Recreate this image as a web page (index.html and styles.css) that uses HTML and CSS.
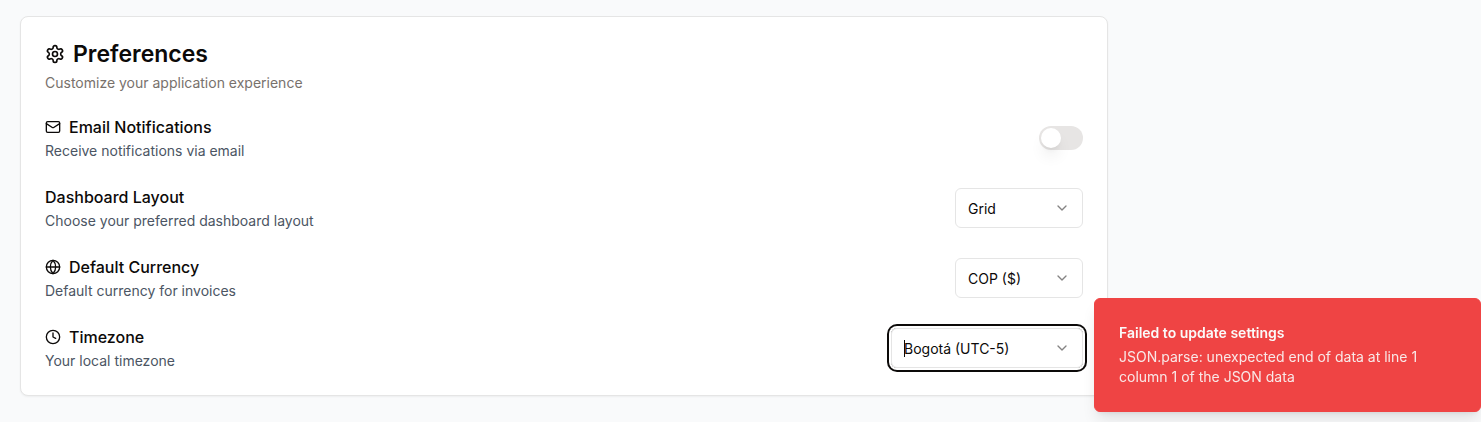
FILE: index.html
```html
<!DOCTYPE html>
<html lang="en">
<head>
<meta charset="utf-8">
<title>Preferences</title>
<link rel="stylesheet" href="styles.css">
</head>
<body>
<main class="page">
  <section class="card">
    <header class="card-header">
      <h1 class="card-title">
        <svg class="icon icon-lg" viewBox="0 0 24 24" aria-hidden="true"><path d="M12.22 2h-.44a2 2 0 0 0-2 2v.18a2 2 0 0 1-1 1.73l-.43.25a2 2 0 0 1-2 0l-.15-.08a2 2 0 0 0-2.73.73l-.22.38a2 2 0 0 0 .73 2.73l.15.1a2 2 0 0 1 1 1.72v.51a2 2 0 0 1-1 1.74l-.15.09a2 2 0 0 0-.73 2.73l.22.38a2 2 0 0 0 2.73.73l.15-.08a2 2 0 0 1 2 0l.43.25a2 2 0 0 1 1 1.73V20a2 2 0 0 0 2 2h.44a2 2 0 0 0 2-2v-.18a2 2 0 0 1 1-1.73l.43-.25a2 2 0 0 1 2 0l.15.08a2 2 0 0 0 2.73-.73l.22-.39a2 2 0 0 0-.73-2.73l-.15-.08a2 2 0 0 1-1-1.74v-.5a2 2 0 0 1 1-1.74l.15-.09a2 2 0 0 0 .73-2.73l-.22-.38a2 2 0 0 0-2.73-.73l-.15.08a2 2 0 0 1-2 0l-.43-.25a2 2 0 0 1-1-1.73V4a2 2 0 0 0-2-2z"/><circle cx="12" cy="12" r="3"/></svg>
        Preferences
      </h1>
      <p class="card-description">Customize your application experience</p>
    </header>
    <div class="settings">
      <div class="setting">
        <div class="setting-text">
          <label class="setting-label" for="email">
            <svg class="icon" viewBox="0 0 24 24" aria-hidden="true"><rect width="20" height="16" x="2" y="4" rx="2"/><path d="m22 7-8.97 5.7a1.94 1.94 0 0 1-2.06 0L2 7"/></svg>
            Email Notifications
          </label>
          <p class="setting-hint">Receive notifications via email</p>
        </div>
        <input class="switch" type="checkbox" role="switch" id="email">
      </div>
      <div class="setting">
        <div class="setting-text">
          <label class="setting-label" for="layout">Dashboard Layout</label>
          <p class="setting-hint">Choose your preferred dashboard layout</p>
        </div>
        <div class="select">
          <select class="select-control" id="layout"><option>Grid</option><option>List</option></select>
          <svg class="icon select-arrow" viewBox="0 0 24 24" aria-hidden="true"><path d="m6 9 6 6 6-6"/></svg>
        </div>
      </div>
      <div class="setting">
        <div class="setting-text">
          <label class="setting-label" for="currency">
            <svg class="icon" viewBox="0 0 24 24" aria-hidden="true"><circle cx="12" cy="12" r="10"/><path d="M12 2a14.5 14.5 0 0 0 0 20 14.5 14.5 0 0 0 0-20"/><path d="M2 12h20"/></svg>
            Default Currency
          </label>
          <p class="setting-hint">Default currency for invoices</p>
        </div>
        <div class="select">
          <select class="select-control" id="currency"><option>COP ($)</option><option>USD ($)</option></select>
          <svg class="icon select-arrow" viewBox="0 0 24 24" aria-hidden="true"><path d="m6 9 6 6 6-6"/></svg>
        </div>
      </div>
      <div class="setting">
        <div class="setting-text">
          <label class="setting-label" for="timezone">
            <svg class="icon" viewBox="0 0 24 24" aria-hidden="true"><circle cx="12" cy="12" r="10"/><path d="M12 6v6l4 2"/></svg>
            Timezone
          </label>
          <p class="setting-hint">Your local timezone</p>
        </div>
        <div class="select select-wide select-focused">
          <select class="select-control" id="timezone"><option>Bogotá (UTC-5)</option></select>
          <span class="select-caret" aria-hidden="true"></span>
          <svg class="icon select-arrow" viewBox="0 0 24 24" aria-hidden="true"><path d="m6 9 6 6 6-6"/></svg>
        </div>
      </div>
    </div>
  </section>
</main>
<div class="toast" role="alert">
  <p class="toast-title">Failed to update settings</p>
  <p class="toast-message">JSON.parse: unexpected end of data at line 1 column 1 of the JSON data</p>
</div>
</body>
</html>
```

FILE: styles.css
```css
* {
  box-sizing: border-box;
}

body {
  margin: 0;
  background: #f9fafb;
  color: #0c0a09;
  font-family: Inter, "Liberation Sans", sans-serif;
  font-size: 14px;
  line-height: 20px;
}

h1,
p {
  margin: 0;
}

.page {
  padding: 16px 20px;
}

.card {
  max-width: 1088px;
  padding: 24px;
  border: 1px solid #e5e5e5;
  border-radius: 8px;
  background: #fff;
  box-shadow: 0 1px 2px rgba(0, 0, 0, 0.05);
}

.card-header {
  display: flex;
  flex-direction: column;
  gap: 6px;
  margin-bottom: 22px;
}

.card-title {
  display: flex;
  align-items: center;
  gap: 8px;
  font-size: 23px;
  font-weight: 600;
  line-height: 26px;
}

.card-description {
  color: #78716c;
}

.icon {
  flex: none;
  width: 16px;
  height: 16px;
  fill: none;
  stroke: currentColor;
  stroke-width: 2;
  stroke-linecap: round;
  stroke-linejoin: round;
}

.icon-lg {
  width: 20px;
  height: 20px;
}

.settings {
  display: flex;
  flex-direction: column;
  gap: 24px;
}

.setting {
  display: flex;
  align-items: center;
  justify-content: space-between;
}

.setting-text {
  display: flex;
  flex-direction: column;
  gap: 2px;
}

.setting-label {
  display: flex;
  align-items: center;
  gap: 8px;
  font-size: 16px;
  font-weight: 500;
  line-height: 24px;
}

.setting-hint {
  color: #4b5563;
}

.switch {
  appearance: none;
  display: flex;
  width: 44px;
  height: 24px;
  margin: 0;
  padding: 2px;
  border-radius: 12px;
  background: #e7e5e4;
}

.switch::before {
  content: "";
  width: 20px;
  height: 20px;
  border-radius: 50%;
  background: #fff;
  box-shadow: 0 10px 15px -3px rgba(0, 0, 0, 0.1), 0 4px 6px -4px rgba(0, 0, 0, 0.1);
}

.switch:checked {
  justify-content: flex-end;
  background: #0c0a09;
}

.select {
  position: relative;
  width: 128px;
  border-radius: 6px;
}

.select-wide {
  width: 192px;
}

.select-focused {
  box-shadow: 0 0 0 2px #fff, 0 0 0 4px #0c0a09;
}

.select-control {
  appearance: none;
  display: block;
  width: 100%;
  height: 40px;
  padding: 1px 36px 0 12px;
  border: 1px solid #e5e5e5;
  border-radius: 6px;
  outline: none;
  background: #fff;
  color: inherit;
  font: inherit;
}

.select-arrow {
  position: absolute;
  top: 12px;
  right: 13px;
  opacity: 0.5;
  pointer-events: none;
}

.select-caret {
  position: absolute;
  top: 12px;
  left: 13px;
  width: 1px;
  height: 17px;
  background: #0c0a09;
}

.toast {
  position: fixed;
  right: 0;
  bottom: 10px;
  display: flex;
  flex-direction: column;
  gap: 4px;
  width: 387px;
  padding: 24px 32px 24px 24px;
  border: 1px solid #ef4444;
  border-radius: 6px;
  background: #ef4444;
  color: #fafaf9;
  box-shadow: 0 10px 15px -3px rgba(0, 0, 0, 0.1), 0 4px 6px -4px rgba(0, 0, 0, 0.1);
}

.toast-title {
  font-weight: 600;
}

.toast-message {
  opacity: 0.9;
}
```
